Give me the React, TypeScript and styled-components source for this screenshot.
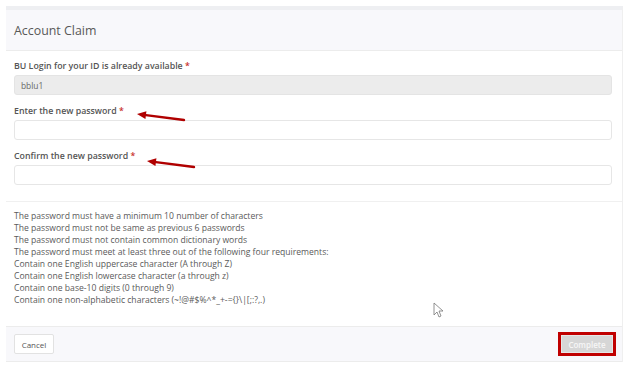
import React from 'react';
import styled, { createGlobalStyle } from 'styled-components';

const GlobalStyle = createGlobalStyle`
  body {
    margin: 0;
    background: #ffffff;
    font-family: "Open Sans", "Liberation Sans", sans-serif;
  }
`;

const Page = styled.div`
  position: relative;
  width: 636px;
  height: 374px;
  padding: 6px 13px 0 6px;
  box-sizing: border-box;
`;

const Panel = styled.div`
  border-top: 4px solid #eeeff2;
  border-right: 1px solid #efefef;
  background: #fff;
`;

const Header = styled.div`
  height: 40px;
  display: flex;
  align-items: center;
  padding-left: 8px;
  background: #f8f8fb;
  border-bottom: 1px solid #ececec;
`;

const Title = styled.h2`
  margin: 0;
  font-size: 12.4px;
  font-weight: 400;
  color: #585858;
`;

const Body = styled.div`
  padding: 8px 10px 0 8px;
`;

const Field = styled.div`
  display: flex;
  flex-direction: column;
  gap: 2px;
  margin-bottom: 9px;
`;

const Label = styled.label`
  font-size: 8.8px;
  font-weight: 600;
  line-height: 14px;
  color: #555;
`;

const Req = styled.span`
  color: #c9302c;
`;

const Input = styled.div<{ $readonly?: boolean }>`
  height: 20px;
  box-sizing: border-box;
  border: 1px solid ${p => (p.$readonly ? '#e4e4e4' : '#e6e6e6')};
  border-radius: 3px;
  background: ${p => (p.$readonly ? '#ececec' : '#fff')};
  display: flex;
  align-items: center;
  padding-left: 6px;
  font-size: 8.4px;
  color: #666;
`;

const Divider = styled.div`
  height: 1px;
  background: #f0f0f0;
  margin-top: 16px;
`;

const Rules = styled.div`
  padding: 8px 0 20px 8px;
`;

const Rule = styled.div`
  font-size: 8.6px;
  line-height: 12px;
  color: #5a5a5a;
  white-space: nowrap;
`;

const Footer = styled.div`
  height: 34px;
  display: flex;
  align-items: center;
  justify-content: space-between;
  padding: 0 6px 0 8px;
  background: #f8f8fb;
  border-top: 1px solid #ececec;
  border-bottom: 1px solid #ececec;
`;

const CancelButton = styled.button`
  height: 20px;
  width: 40px;
  padding: 0;
  border: 1px solid #e2e2e2;
  border-radius: 2px;
  background: #fff;
  font-family: inherit;
  font-size: 8px;
  color: #555;
`;

const Highlight = styled.div`
  border: 3px solid #c00000;
  padding: 0;
  display: flex;
`;

const CompleteButton = styled.button`
  width: 52px;
  height: 18px;
  padding: 0;
  border: 1px solid #e6e6e6;
  background: #d6d6d6;
  font-family: inherit;
  font-size: 8px;
  font-weight: 600;
  color: #f6f6f6;
`;

const Overlay = styled.svg`
  position: absolute;
  left: 0;
  top: 0;
  pointer-events: none;
`;

const rules = [
  'The password must have a minimum 10 number of characters',
  'The password must not be same as previous 6 passwords',
  'The password must not contain common dictionary words',
  'The password must meet at least three out of the following four requirements:',
  'Contain one English uppercase character (A through Z)',
  'Contain one English lowercase character (a through z)',
  'Contain one base-10 digits (0 through 9)',
  'Contain one non-alphabetic characters (~!@#$%^*_+-={}\\|[;:?,.)',
];

const Arrow = ({ x1, y1, x2, y2 }: { x1: number; y1: number; x2: number; y2: number }) => {
  const ang = Math.atan2(y2 - y1, x2 - x1);
  const len = 9;
  const w = 4;
  const bx = x2 - len * Math.cos(ang);
  const by = y2 - len * Math.sin(ang);
  const px = -Math.sin(ang) * w;
  const py = Math.cos(ang) * w;
  return (
    <g>
      <line x1={x1} y1={y1} x2={bx} y2={by} stroke="#b00000" strokeWidth={2.4} strokeLinecap="round" />
      <polygon points={`${x2},${y2} ${bx + px},${by + py} ${bx - px},${by - py}`} fill="#b00000" />
    </g>
  );
};

const App = () => {
  return (
    <>
      <GlobalStyle />
      <Page>
        <Panel>
          <Header>
            <Title>Account Claim</Title>
          </Header>
          <Body>
            <Field>
              <Label>
                BU Login for your ID is already available <Req>*</Req>
              </Label>
              <Input $readonly>bblu1</Input>
            </Field>
            <Field>
              <Label>
                Enter the new password <Req>*</Req>
              </Label>
              <Input />
            </Field>
            <Field>
              <Label>
                Confirm the new password <Req>*</Req>
              </Label>
              <Input />
            </Field>
          </Body>
          <Divider />
          <Rules>
            {rules.map(r => (
              <Rule key={r}>{r}</Rule>
            ))}
          </Rules>
          <Footer>
            <CancelButton>Cancel</CancelButton>
            <Highlight>
              <CompleteButton>Complete</CompleteButton>
            </Highlight>
          </Footer>
        </Panel>
        <Overlay width={636} height={374} viewBox="0 0 636 374">
          <Arrow x1={184} y1={120} x2={137} y2={114} />
          <Arrow x1={194} y1={167} x2={147} y2={161} />
          <path
            d="M434 303 L434 315 L437 312 L439 317 L441 316 L439 311 L443 311 Z"
            fill="#fff"
            stroke="#777"
            strokeWidth={0.8}
          />
        </Overlay>
      </Page>
    </>
  );
};

export default App;
